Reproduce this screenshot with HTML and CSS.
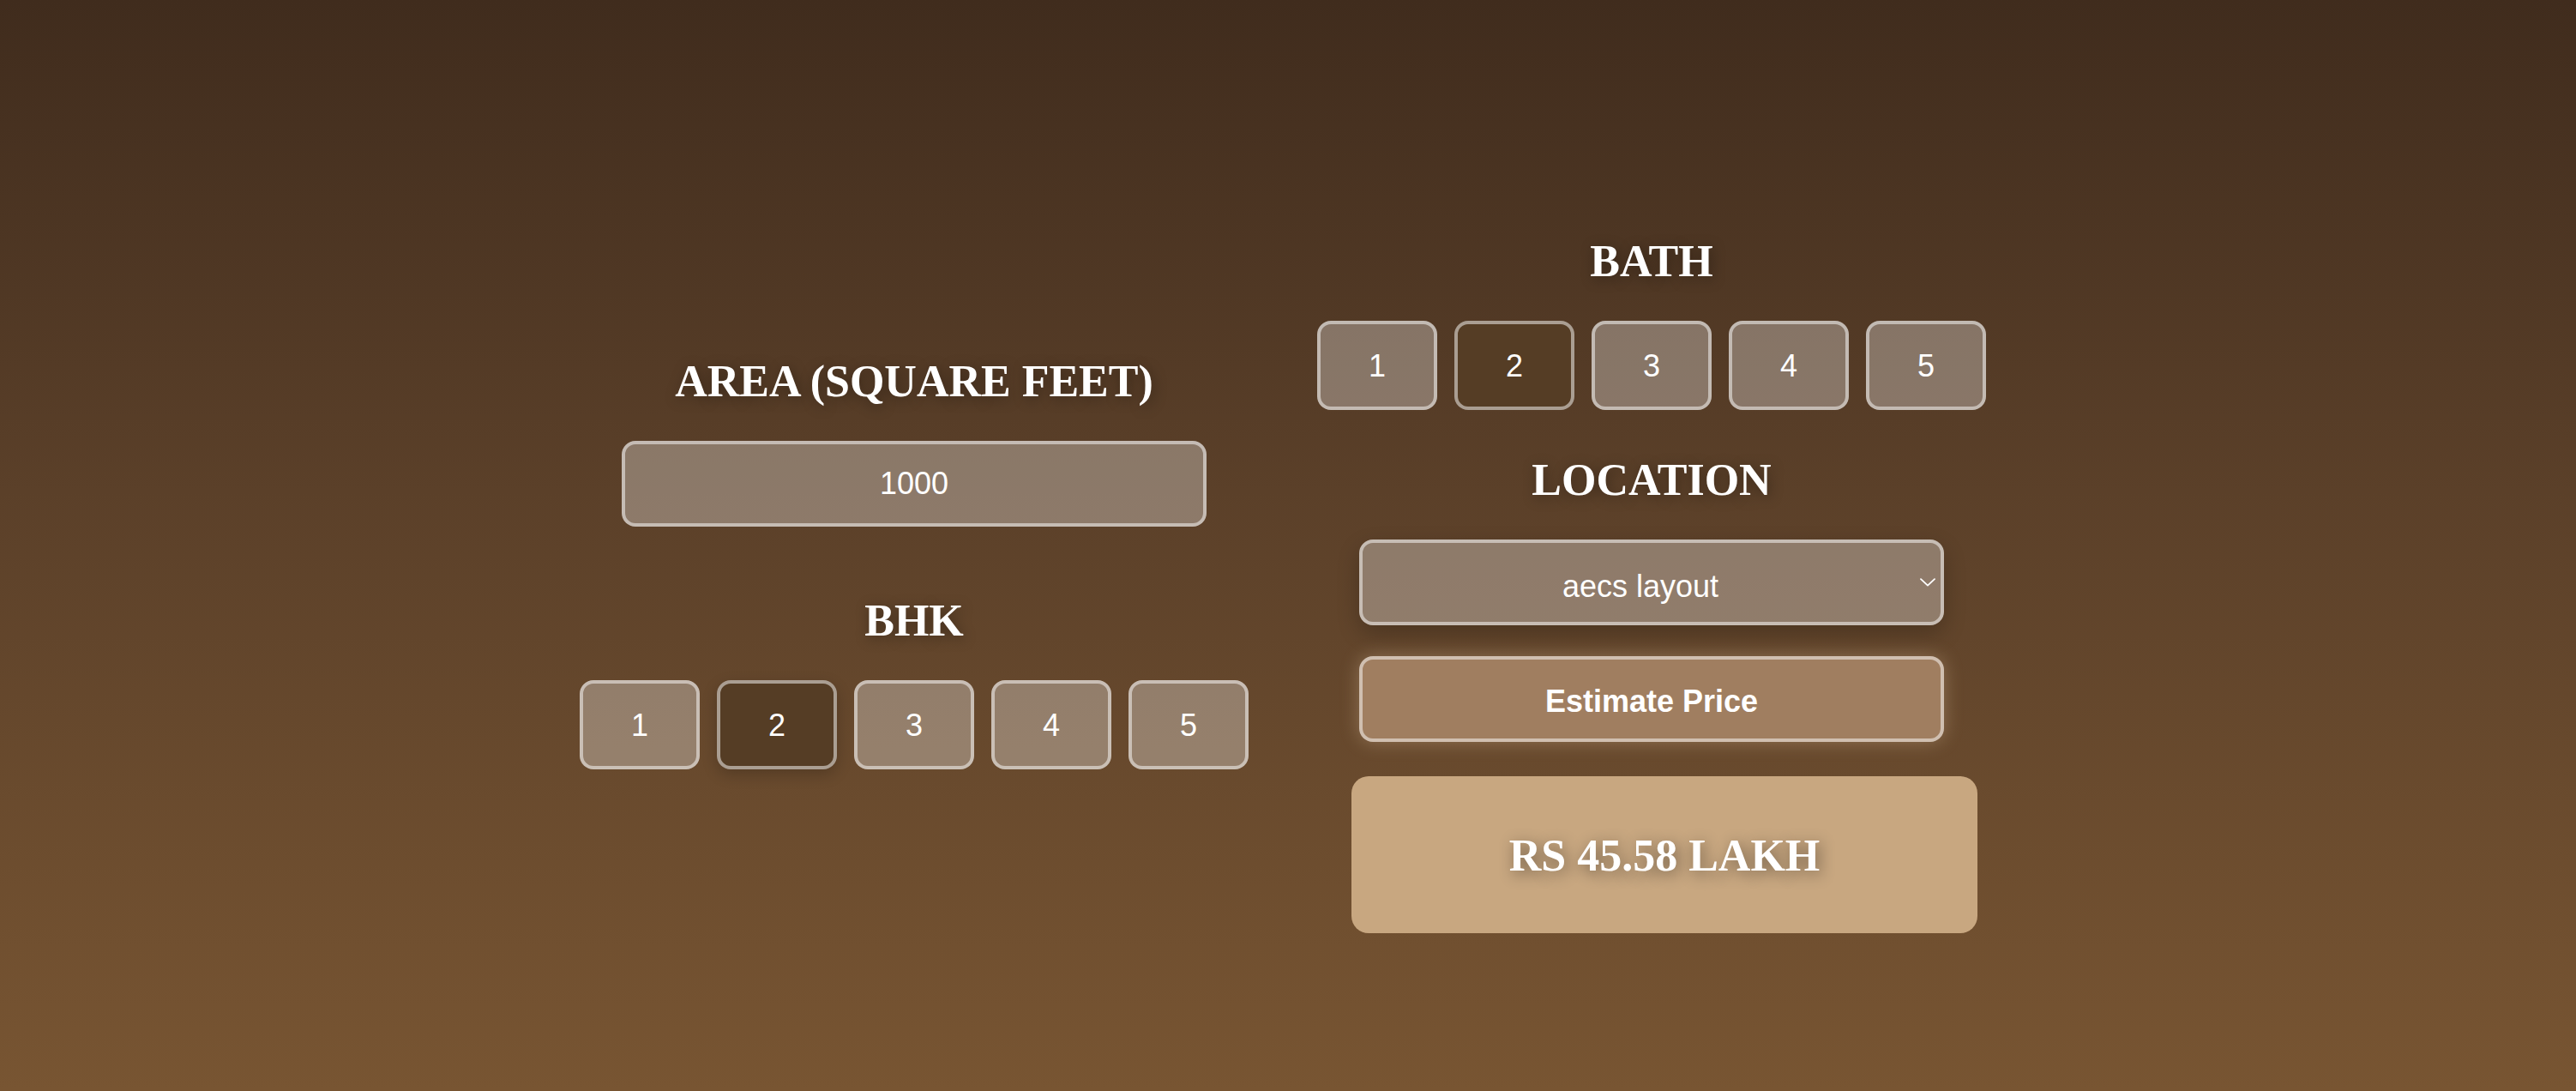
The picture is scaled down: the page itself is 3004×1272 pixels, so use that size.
FILE: index.html
```html
<!DOCTYPE html>
<html lang="en">
<head>
<meta charset="utf-8">
<title>Home Price Estimator</title>
<link rel="stylesheet" href="styles.css">
</head>
<body>
<main class="app">
  <section class="col col-left">
    <div class="field">
      <h2 class="label">AREA (SQUARE FEET)</h2>
      <input class="box-input" type="text" value="1000">
    </div>
    <div class="field field-bhk">
      <h2 class="label">BHK</h2>
      <div class="choices choices-bhk">
        <button class="choice">1</button>
        <button class="choice is-active">2</button>
        <button class="choice">3</button>
        <button class="choice">4</button>
        <button class="choice">5</button>
      </div>
    </div>
  </section>
  <section class="col col-right">
    <div class="field">
      <h2 class="label">BATH</h2>
      <div class="choices">
        <button class="choice">1</button>
        <button class="choice is-active">2</button>
        <button class="choice">3</button>
        <button class="choice">4</button>
        <button class="choice">5</button>
      </div>
    </div>
    <div class="field field-location">
      <h2 class="label">LOCATION</h2>
      <div class="select-wrap">
        <select class="box-select">
          <option>aecs layout</option>
        </select>
        <svg class="chevron" width="18" height="10" viewBox="0 0 18 10" aria-hidden="true">
          <path d="M1 1.2 L9 8.6 L17 1.2" fill="none" stroke="#ffffff" stroke-width="1.8" stroke-linecap="round" stroke-linejoin="round"/>
        </svg>
      </div>
    </div>
    <button class="estimate">Estimate Price</button>
    <div class="result">
      <h2 class="result-text">RS 45.58 LAKH</h2>
    </div>
  </section>
</main>
</body>
</html>
```
FILE: styles.css
```css
html, body {
  margin: 0;
  padding: 0;
}

body {
  min-height: 1272px;
  background: linear-gradient(to bottom, #402c1d 0%, #5b4029 45%, #785532 100%);
  font-family: "Liberation Sans", Arial, sans-serif;
  color: #ffffff;
}

.app {
  display: flex;
  justify-content: center;
  align-items: flex-start;
  gap: 80px;
  padding: 273px 12px 0 0;
}

.col {
  width: 780px;
  display: flex;
  flex-direction: column;
}

.col-left {
  margin-top: 140px;
}

.field {
  display: flex;
  flex-direction: column;
  align-items: center;
}

.field-bhk {
  margin-top: 78px;
}

.field-location {
  margin-top: 50px;
}

.label {
  margin: 2px 0 39px;
  font-family: "Liberation Serif", "Times New Roman", serif;
  font-weight: bold;
  font-size: 52px;
  line-height: 60px;
  color: #ffffff;
  text-shadow: 2px 3px 16px rgba(0, 0, 0, 0.35);
  white-space: nowrap;
}

.choices {
  display: flex;
  gap: 20px;
}

.choice {
  box-sizing: border-box;
  width: 140px;
  height: 104px;
  padding: 2px 0 0;
  border: 4px solid rgba(255, 255, 255, 0.5);
  border-radius: 16px;
  background: rgba(255, 255, 255, 0.3);
  color: #ffffff;
  font-family: "Liberation Sans", Arial, sans-serif;
  font-size: 36px;
  cursor: pointer;
}

.choice.is-active {
  background: #553d25;
}

.choices-bhk .choice.is-active {
  box-shadow: 0 6px 18px rgba(0, 0, 0, 0.2);
}

.box-input,
.box-select {
  box-sizing: border-box;
  width: 682px;
  height: 100px;
  border: 4px solid rgba(255, 255, 255, 0.5);
  border-radius: 16px;
  background: rgba(255, 255, 255, 0.3);
  color: #ffffff;
  font-family: "Liberation Sans", Arial, sans-serif;
  font-size: 36px;
  text-align: center;
  outline: none;
}

.box-input {
  padding: 0 10px;
}

.select-wrap {
  position: relative;
  width: 682px;
  height: 100px;
  border-radius: 16px;
  box-shadow: 0 10px 26px rgba(0, 0, 0, 0.22);
}

.box-select {
  display: block;
  appearance: none;
  -webkit-appearance: none;
  padding: 8px 36px 0 10px;
  text-align-last: center;
}

.box-select option {
  color: #000000;
}

.chevron {
  position: absolute;
  right: 10px;
  top: 45px;
  pointer-events: none;
}

.estimate {
  box-sizing: border-box;
  align-self: center;
  width: 682px;
  height: 100px;
  margin-top: 36px;
  padding: 5px 0 0;
  border: 4px solid rgba(255, 255, 255, 0.5);
  border-radius: 16px;
  background: #a07e60;
  color: #ffffff;
  font-family: "Liberation Sans", Arial, sans-serif;
  font-weight: bold;
  font-size: 36px;
  box-shadow: 0 0 22px rgba(255, 225, 190, 0.28);
  cursor: pointer;
}

.result {
  box-sizing: border-box;
  width: 730px;
  height: 183px;
  margin: 40px 0 0 40px;
  border-radius: 20px;
  background: #c8a780;
  display: flex;
  align-items: center;
  justify-content: center;
}

.result-text {
  margin: 0;
  padding-top: 3px;
  font-family: "Liberation Serif", "Times New Roman", serif;
  font-weight: bold;
  font-size: 52px;
  line-height: 60px;
  color: #ffffff;
  text-shadow: 3px 4px 18px rgba(0, 0, 0, 0.45);
}
```
